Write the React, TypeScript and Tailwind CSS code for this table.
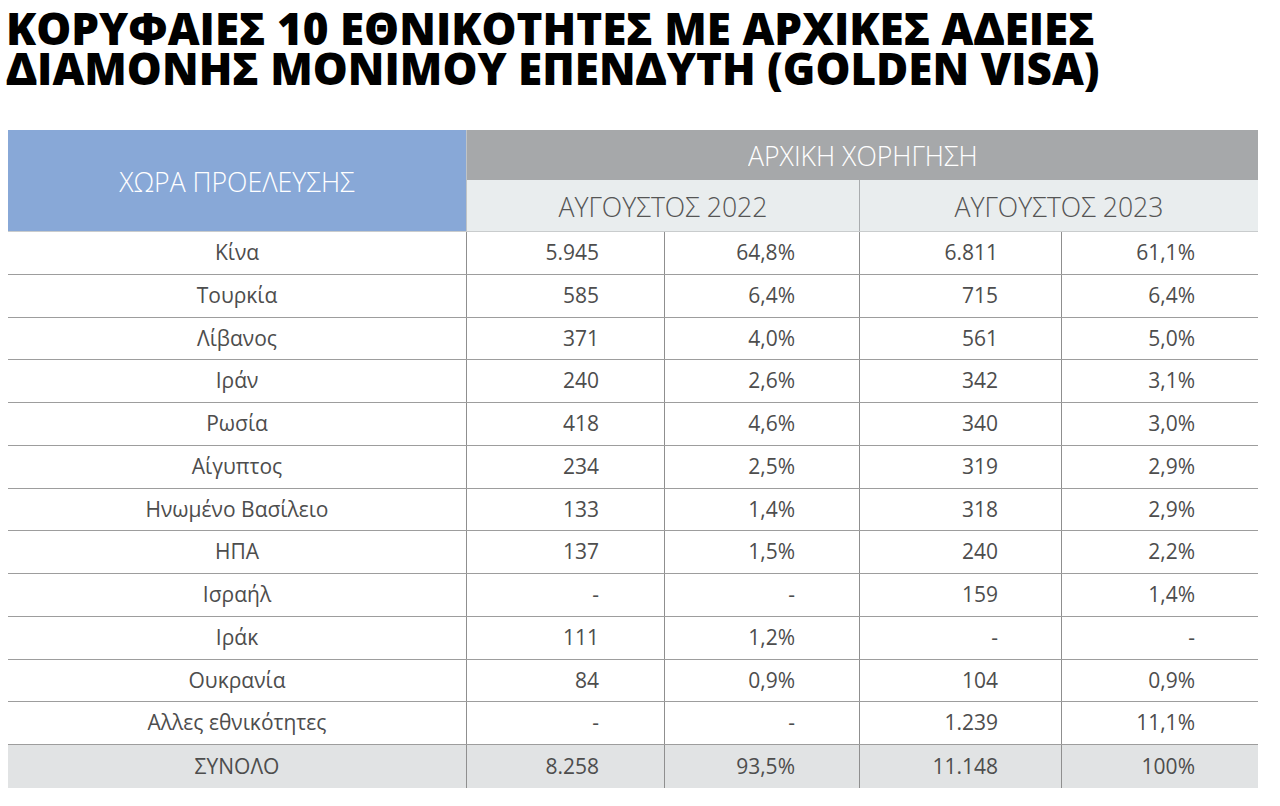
import React from "react";

type Row = [string, string, string, string, string];

const rows: Row[] = [
  ["Κίνα", "5.945", "64,8%", "6.811", "61,1%"],
  ["Τουρκία", "585", "6,4%", "715", "6,4%"],
  ["Λίβανος", "371", "4,0%", "561", "5,0%"],
  ["Ιράν", "240", "2,6%", "342", "3,1%"],
  ["Ρωσία", "418", "4,6%", "340", "3,0%"],
  ["Αίγυπτος", "234", "2,5%", "319", "2,9%"],
  ["Ηνωμένο Βασίλειο", "133", "1,4%", "318", "2,9%"],
  ["ΗΠΑ", "137", "1,5%", "240", "2,2%"],
  ["Ισραήλ", "-", "-", "159", "1,4%"],
  ["Ιράκ", "111", "1,2%", "-", "-"],
  ["Ουκρανία", "84", "0,9%", "104", "0,9%"],
  ["Αλλες εθνικότητες", "-", "-", "1.239", "11,1%"],
];

const font = { fontFamily: '"Open Sans", "Noto Sans", sans-serif' };

function DataRow({ r, total }: { r: Row; total?: boolean }) {
  return (
    <div
      className={`grid grid-cols-[458px_198px_195px_202px_197px] h-[42.75px] text-[21px] text-[#4d4d4d] ${
        total ? "bg-[#e1e3e4]" : "border-b border-[#9d9d9d]"
      }`}
    >
      <div className="flex items-center justify-center">{r[0]}</div>
      <div className="flex items-center justify-end pr-[65px] border-l border-[#8f8f8f]">{r[1]}</div>
      <div className="flex items-center justify-end pr-[64px] border-l border-[#8f8f8f]">{r[2]}</div>
      <div className="flex items-center justify-end pr-[63px] border-l border-[#8f8f8f]">{r[3]}</div>
      <div className="flex items-center justify-end pr-[63px] border-l border-[#8f8f8f]">{r[4]}</div>
    </div>
  );
}

export default function App() {
  return (
    <div className="w-[1280px] h-[806px] bg-white overflow-hidden" style={font}>
      <h1 className="pl-[6px] pt-[8px] text-[44px] font-extrabold text-black">
        <div className="h-[40px] leading-[40px] whitespace-nowrap">ΚΟΡΥΦΑΙΕΣ 10 ΕΘΝΙΚΟΤΗΤΕΣ ΜΕ ΑΡΧΙΚΕΣ ΑΔΕΙΕΣ</div>
        <div className="h-[40px] leading-[40px] whitespace-nowrap">ΔΙΑΜΟΝΗΣ ΜΟΝΙΜΟΥ ΕΠΕΝΔΥΤΗ (GOLDEN VISA)</div>
      </h1>
      <div className="ml-[8px] mt-[42px] w-[1250px]">
        <div className="grid grid-cols-[458px_393px_399px] grid-rows-[50px_51px] border-b border-[#c9cccd]">
          <div className="row-span-2 bg-[#88a8d7] flex items-center justify-center text-white text-[28px] font-light">
            <span className="inline-block scale-x-[0.95] whitespace-nowrap">ΧΩΡΑ ΠΡΟΕΛΕΥΣΗΣ</span>
          </div>
          <div className="col-span-2 bg-[#a6a8aa] flex items-center justify-center text-white text-[28px] font-light border-l border-[#c0c4c6]">
            <span className="inline-block scale-x-[0.95] whitespace-nowrap">ΑΡΧΙΚΗ ΧΟΡΗΓΗΣΗ</span>
          </div>
          <div className="bg-[#e9edee] flex items-center justify-center text-[#555] text-[28px] font-light border-l border-[#c0c4c6]">
            <span className="inline-block scale-x-[0.95] whitespace-nowrap">ΑΥΓΟΥΣΤΟΣ 2022</span>
          </div>
          <div className="bg-[#e9edee] flex items-center justify-center text-[#555] text-[28px] font-light border-l border-[#a9acae]">
            <span className="inline-block scale-x-[0.95] whitespace-nowrap">ΑΥΓΟΥΣΤΟΣ 2023</span>
          </div>
        </div>
        {rows.map((r, i) => (
          <DataRow key={i} r={r} />
        ))}
        <DataRow r={["ΣΥΝΟΛΟ", "8.258", "93,5%", "11.148", "100%"]} total />
      </div>
    </div>
  );
}
